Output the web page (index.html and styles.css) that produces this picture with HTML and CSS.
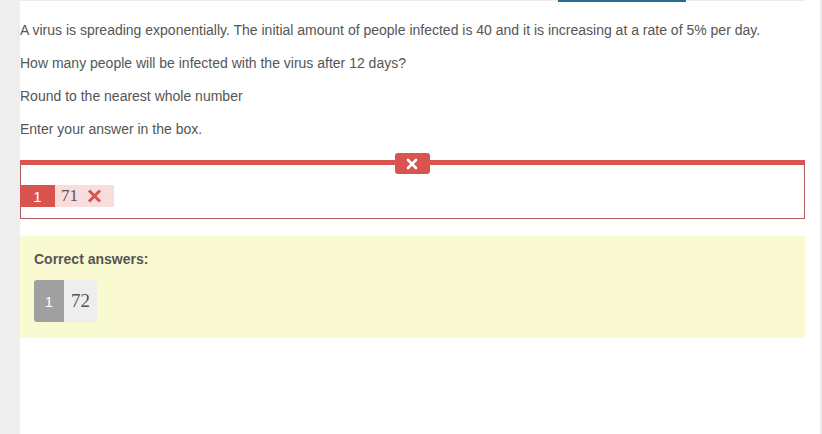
FILE: index.html
```html
<!DOCTYPE html>
<html>
<head>
<meta charset="utf-8">
<link rel="stylesheet" href="styles.css">
</head>
<body>
<div class="page">
  <div class="gutter"></div>
  <main class="content">
    <div class="topline"><div class="tab"></div></div>
    <div class="question">
      <p>A virus is spreading exponentially. The initial amount of people infected is 40 and it is increasing at a rate of 5% per day.</p>
      <p>How many people will be infected with the virus after 12 days?</p>
      <p>Round to the nearest whole number</p>
      <p>Enter your answer in the box.</p>
    </div>
    <div class="response">
      <span class="badge-x">
        <svg width="12" height="12" viewBox="0 0 12 12"><path d="M2 2 L10 10 M10 2 L2 10" stroke="#fff" stroke-width="2.6" stroke-linecap="round"/></svg>
      </span>
      <div class="chip wrong">
        <span class="num">1</span>
        <span class="val">71</span>
        <svg class="cross" width="15" height="14" viewBox="0 0 15 14"><path d="M2 1.5 L13 12.5 M13 1.5 L2 12.5" stroke="#d9534f" stroke-width="3"/></svg>
      </div>
    </div>
    <div class="correct">
      <div class="correct-title">Correct answers:</div>
      <div class="chip right">
        <span class="num">1</span>
        <span class="val">72</span>
      </div>
    </div>
  </main>
  <div class="rgutter"></div>
</div>
</body>
</html>
```
FILE: styles.css
```css
html, body {
  margin: 0;
  padding: 0;
  background: #eeeeee;
}
body {
  font-family: "Liberation Sans", Arial, sans-serif;
  font-size: 14px;
  color: #555;
}
.page {
  display: flex;
  height: 434px;
}
.gutter {
  width: 20px;
  flex: none;
  background: #eeeeee;
}
.rgutter {
  width: 2px;
  flex: none;
  background: #ececec;
}
.content {
  width: 800px;
  flex: none;
  background: #fff;
  padding-right: 15px;
  box-sizing: border-box;
}
.topline {
  height: 2px;
  border-top: 1px solid #ececec;
  box-sizing: border-box;
}
.tab {
  margin-left: 538px;
  width: 128px;
  height: 2px;
  margin-top: -1px;
  background: #1e6e8c;
}
.question {
  padding-top: 18px;
}
.question p {
  margin: 0 0 13px;
  line-height: 20px;
}
.response {
  position: relative;
  margin-top: 21px;
  border: 1px solid #b5595a;
  border-top: 5px solid #d9534f;
  padding-top: 20px;
  box-sizing: border-box;
  height: 59px;
}
.badge-x {
  position: absolute;
  top: -12px;
  left: 50%;
  margin-left: -18px;
  width: 35px;
  height: 21px;
  background: #d9534f;
  border-radius: 3px;
  display: flex;
  align-items: center;
  justify-content: center;
}
.chip {
  display: inline-flex;
  align-items: stretch;
}
.chip.wrong {
  margin-left: -1px;
  height: 22px;
  background: #f9dcdc;
  width: 94px;
}
.chip .num {
  display: flex;
  align-items: center;
  justify-content: center;
  color: #fff;
  font-size: 15px;
}
.chip.wrong .num {
  width: 35px;
  background: #d9534f;
}
.chip .val {
  display: flex;
  align-items: center;
  font-family: "Liberation Serif", "Times New Roman", serif;
  color: #555;
}
.chip.wrong .val {
  font-size: 17px;
  padding-left: 6px;
}
.chip.wrong .cross {
  align-self: center;
  margin-left: 9px;
}
.correct {
  margin-top: 17px;
  background: #fafad2;
  height: 102px;
  padding: 14px 14px 0;
  box-sizing: border-box;
}
.correct-title {
  font-weight: bold;
  color: #555;
  line-height: 18px;
}
.chip.right {
  margin-top: 12px;
  height: 42px;
  border-radius: 3px;
  overflow: hidden;
}
.chip.right .num {
  width: 30px;
  background: #a0a0a0;
}
.chip.right .val {
  width: 33px;
  justify-content: center;
  background: #eeeeee;
  font-size: 19px;
}
```
